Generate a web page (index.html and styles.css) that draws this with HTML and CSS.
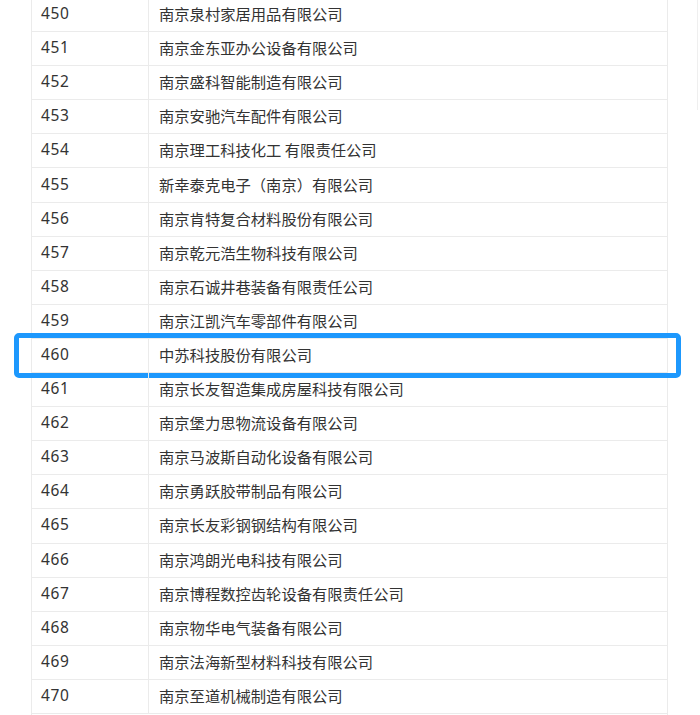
FILE: index.html
```html
<!DOCTYPE html>
<html lang="zh">
<head>
<meta charset="utf-8">
<link rel="stylesheet" href="styles.css">
</head>
<body>
<div class="edge"></div>
<div class="table">
  <div class="row"><div class="num">450</div><div class="name">南京泉村家居用品有限公司</div></div>
  <div class="row"><div class="num">451</div><div class="name">南京金东亚办公设备有限公司</div></div>
  <div class="row"><div class="num">452</div><div class="name">南京盛科智能制造有限公司</div></div>
  <div class="row"><div class="num">453</div><div class="name">南京安驰汽车配件有限公司</div></div>
  <div class="row"><div class="num">454</div><div class="name">南京理工科技化工 有限责任公司</div></div>
  <div class="row"><div class="num">455</div><div class="name">新幸泰克电子（南京）有限公司</div></div>
  <div class="row"><div class="num">456</div><div class="name">南京肯特复合材料股份有限公司</div></div>
  <div class="row"><div class="num">457</div><div class="name">南京乾元浩生物科技有限公司</div></div>
  <div class="row"><div class="num">458</div><div class="name">南京石诚井巷装备有限责任公司</div></div>
  <div class="row"><div class="num">459</div><div class="name">南京江凯汽车零部件有限公司</div></div>
  <div class="row hl"><div class="num">460</div><div class="name">中苏科技股份有限公司</div><div class="mark"></div></div>
  <div class="row"><div class="num">461</div><div class="name">南京长友智造集成房屋科技有限公司</div></div>
  <div class="row"><div class="num">462</div><div class="name">南京堡力思物流设备有限公司</div></div>
  <div class="row"><div class="num">463</div><div class="name">南京马波斯自动化设备有限公司</div></div>
  <div class="row"><div class="num">464</div><div class="name">南京勇跃胶带制品有限公司</div></div>
  <div class="row"><div class="num">465</div><div class="name">南京长友彩钢钢结构有限公司</div></div>
  <div class="row"><div class="num">466</div><div class="name">南京鸿朗光电科技有限公司</div></div>
  <div class="row"><div class="num">467</div><div class="name">南京博程数控齿轮设备有限责任公司</div></div>
  <div class="row"><div class="num">468</div><div class="name">南京物华电气装备有限公司</div></div>
  <div class="row"><div class="num">469</div><div class="name">南京法海新型材料科技有限公司</div></div>
  <div class="row"><div class="num">470</div><div class="name">南京至道机械制造有限公司</div></div>
  <div class="row"></div>
</div>
</body>
</html>
```
FILE: styles.css
```css
html, body {
  margin: 0;
  padding: 0;
  background: #ffffff;
  overflow: hidden;
}
body {
  height: 715px;
  position: relative;
  font-family: "Noto Sans CJK SC", "Noto Sans", sans-serif;
  color: #333333;
}
.edge {
  position: absolute;
  left: 697px;
  top: 0;
  width: 1px;
  height: 110px;
  background: #efefef;
}
.table {
  margin: -2px 0 0 31px;
  width: 637px;
  box-sizing: border-box;
  border-left: 1px solid #ebebeb;
  border-right: 1px solid #ebebeb;
}
.row {
  position: relative;
  display: grid;
  grid-template-columns: 117px 1fr;
  height: 34.1px;
  box-sizing: border-box;
  border-bottom: 1px solid #ebebeb;
  align-items: center;
}
.num {
  height: 100%;
  box-sizing: border-box;
  border-right: 1px solid #ebebeb;
  padding: 0 0 3px 9px;
  display: flex;
  align-items: center;
  font-family: "Noto Sans", "Liberation Sans", sans-serif;
  font-size: 15.5px;
  letter-spacing: 0.6px;
}
.name {
  padding: 0 0 3px 10px;
  font-size: 15.3px;
  white-space: nowrap;
}
.mark {
  position: absolute;
  top: -6px;
  bottom: -6px;
  left: -18px;
  right: -14px;
  border: 5px solid #1d98fd;
  border-radius: 5px;
  pointer-events: none;
}
```
